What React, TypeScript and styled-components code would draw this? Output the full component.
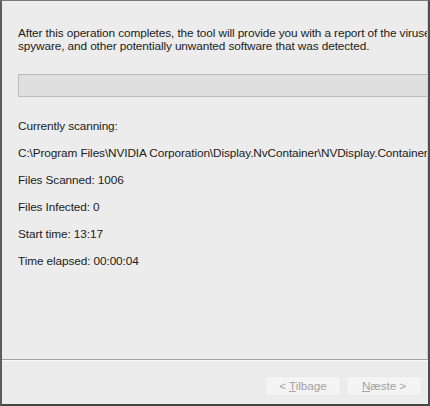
import styled, { createGlobalStyle } from 'styled-components';

const GlobalStyle = createGlobalStyle`
  html, body {
    margin: 0;
    padding: 0;
    background: #ececec;
  }
`;

const infoRows = [
  'Files Scanned: 1006',
  'Files Infected: 0',
  'Start time: 13:17',
  'Time elapsed: 00:00:04',
];

export default function App() {
  return (
    <>
      <GlobalStyle />
      <Window>
        <Content>
          <Intro>
            After this operation completes, the tool will provide you with a report of the viruses,
            <br />
            spyware, and other potentially unwanted software that was detected.
          </Intro>
          <ProgressBar />
          <InfoList>
            <Line>Currently scanning:</Line>
            <Line>C:\Program Files\NVIDIA Corporation\Display.NvContainer\NVDisplay.Container.exe</Line>
            {infoRows.map((row) => (
              <Line key={row}>{row}</Line>
            ))}
          </InfoList>
        </Content>
        <Footer>
          <WizardButton disabled>
            &lt; <u>T</u>ilbage
          </WizardButton>
          <WizardButton disabled>
            <u>N</u>æste &gt;
          </WizardButton>
        </Footer>
      </Window>
    </>
  );
}

const Window = styled.div`
  box-sizing: border-box;
  width: 430px;
  height: 406px;
  display: flex;
  flex-direction: column;
  background: #ececec;
  border-top: 1px solid #7a7a7a;
  border-left: 2px solid #5c5c5c;
  border-right: 2px solid #4e4e4e;
  border-bottom: 2px solid #474747;
  font-family: 'Liberation Sans', Arial, sans-serif;
  font-size: 11.8px;
  letter-spacing: -0.1px;
  color: #1b1b1b;
  overflow: hidden;
`;

const Content = styled.div`
  flex: 1;
  padding: 26px 0 0 16px;
  border-right: 1px solid #d2d2d2;
  border-bottom: 1px solid #a3a3a3;
  overflow: hidden;
`;

const Intro = styled.p`
  margin: 0;
  line-height: 13px;
  white-space: nowrap;
`;

const ProgressBar = styled.div`
  box-sizing: border-box;
  height: 23px;
  margin-top: 21px;
  background: #dfdfdf;
  border: 1px solid #bcbcbc;
  border-right: none;
`;

const InfoList = styled.div`
  display: flex;
  flex-direction: column;
  gap: 14px;
  margin-top: 23px;
`;

const Line = styled.div`
  line-height: 13px;
  white-space: nowrap;
`;

const Footer = styled.div`
  height: 44px;
  display: flex;
  justify-content: flex-end;
  align-items: flex-start;
  gap: 5px;
  padding: 15px 6px 0 0;
  border-top: 1px solid #fafafa;
  box-sizing: border-box;
`;

const WizardButton = styled.button`
  width: 76px;
  height: 20px;
  padding: 0;
  background: #f4f4f4;
  border: 1px solid #e8e8e8;
  border-radius: 2px;
  font-family: 'Liberation Sans', Arial, sans-serif;
  font-size: 11.8px;
  letter-spacing: -0.1px;
  color: #a2a2a2;
`;
